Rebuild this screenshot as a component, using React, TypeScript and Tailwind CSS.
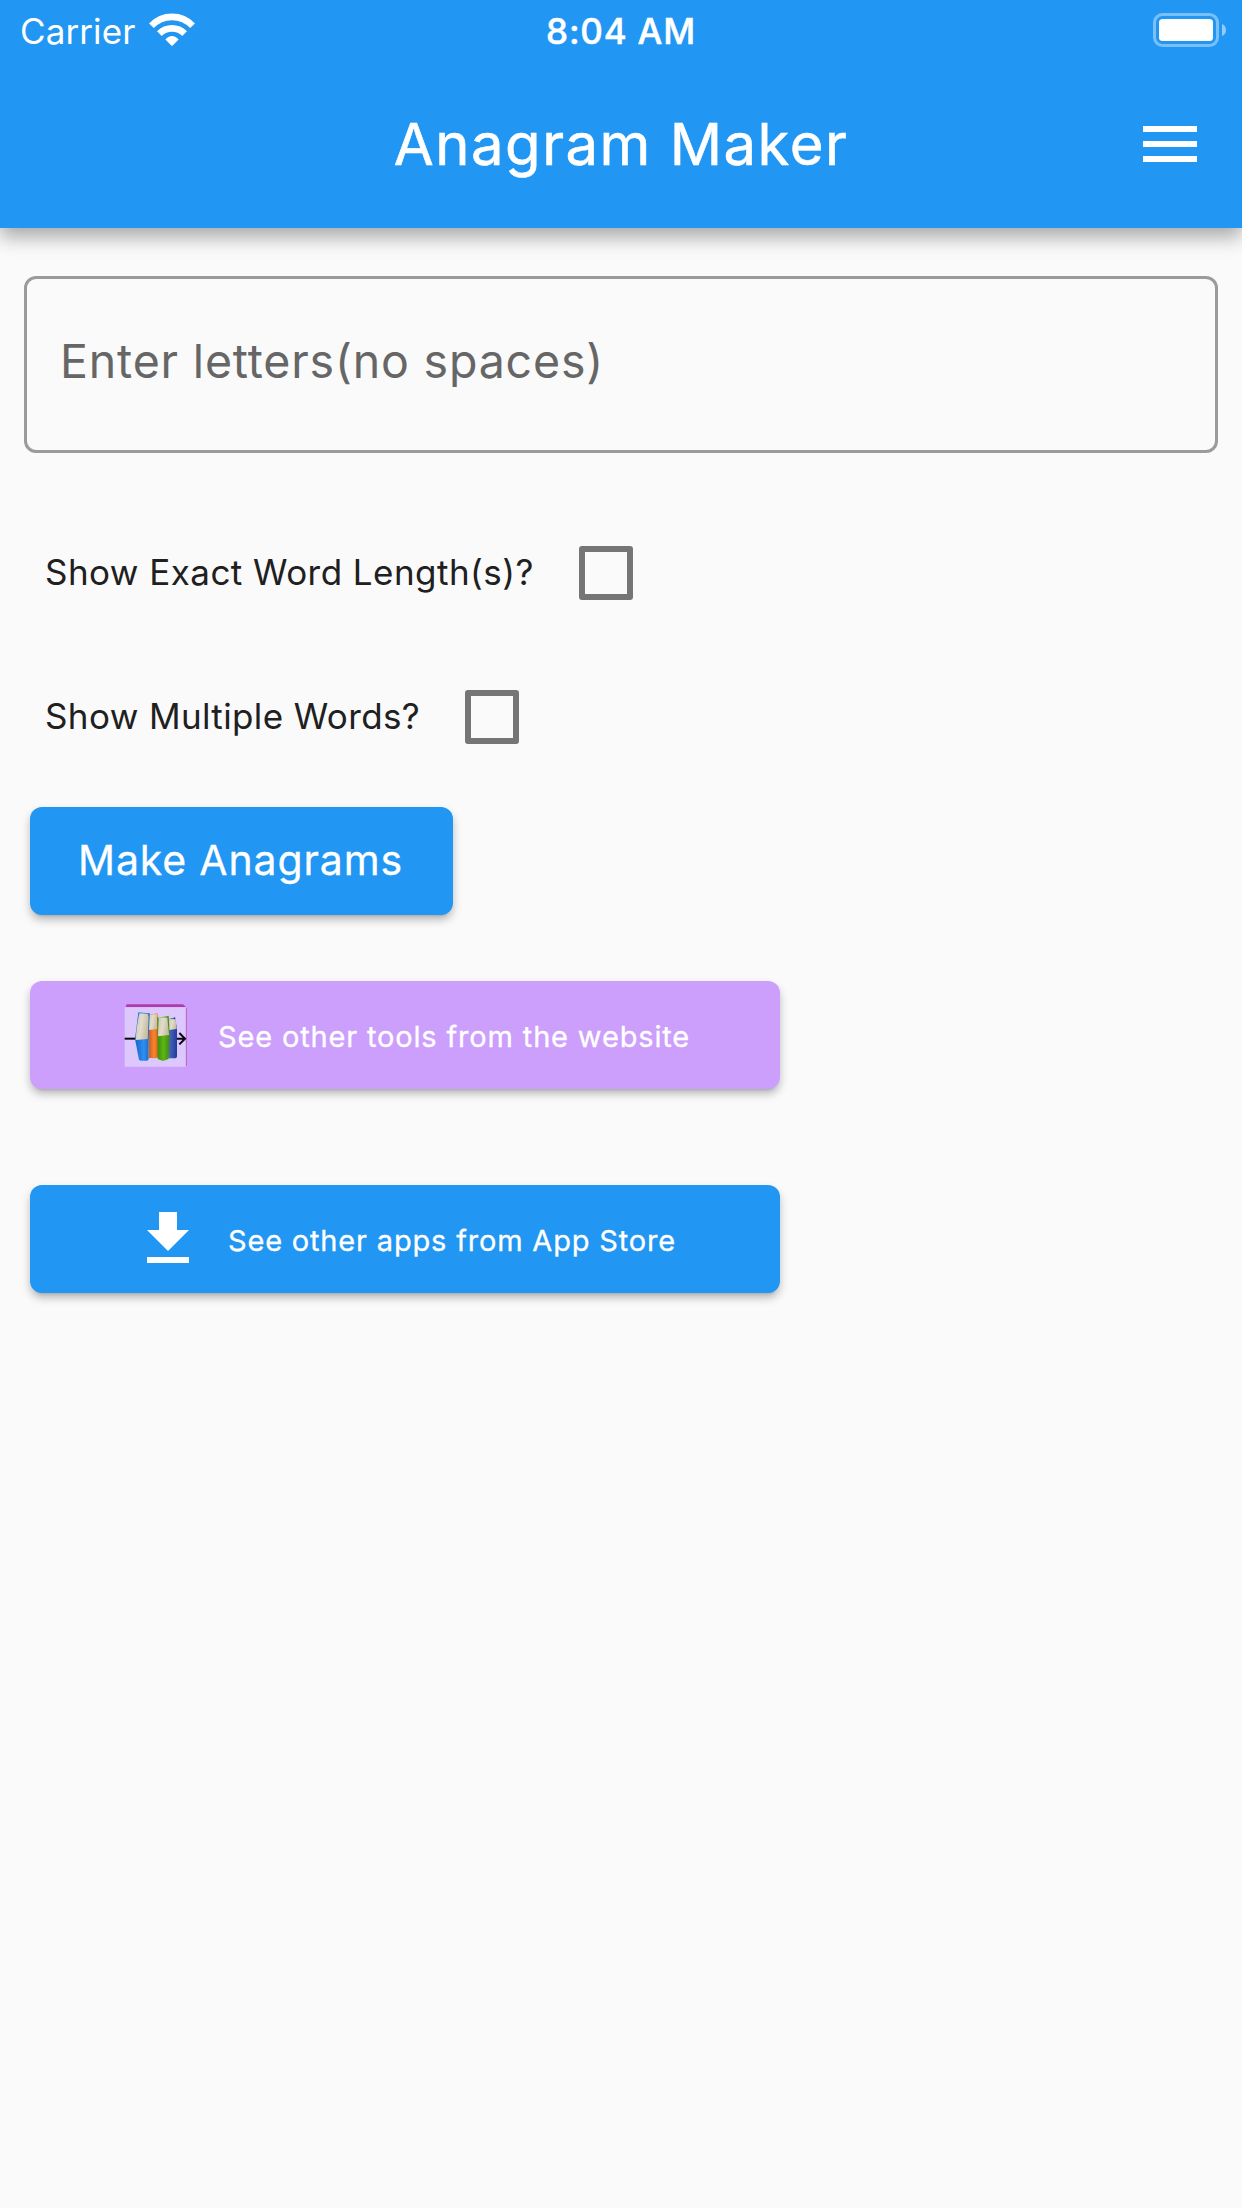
import { useState } from "react";

function WifiIcon() {
  return (
    <svg viewBox="0 0 46 33" className="ml-[14px] mt-[-5px] h-[33px] w-[46px]" fill="none" stroke="#fff">
      <path d="M2.4 12.8A28.2 28.2 0 0 1 43.6 12.8" strokeWidth="6.8" />
      <path d="M10.4 20.6A18 18 0 0 1 35.6 20.6" strokeWidth="6.8" />
      <path d="M16.4 26.4Q19.2 22.9 23 22.9T29.6 26.4L23.7 32.5Q23 33.2 22.3 32.5Z" fill="#fff" stroke="none" />
    </svg>
  );
}

function BatteryIcon() {
  return (
    <svg viewBox="0 0 73 34" className="mt-[-4px] h-[34px] w-[73px]">
      <rect x="1.5" y="1.5" width="63" height="31" rx="8" fill="none" stroke="#fff" strokeOpacity="0.4" strokeWidth="3" />
      <rect x="6" y="6" width="54" height="22" rx="3.5" fill="#fff" />
      <path d="M69 11C74.3 12.5 74.3 21.5 69 23Z" fill="#fff" fillOpacity="0.5" />
    </svg>
  );
}

function BooksIcon() {
  return (
    <svg viewBox="73 71 189 189" className="h-[63px] w-[63px]">
      <defs>
        <linearGradient id="blue" x1="0" x2="1">
          <stop offset="0" stopColor="#1565c8" />
          <stop offset="0.6" stopColor="#2f8ff0" />
          <stop offset="1" stopColor="#1765c4" />
        </linearGradient>
        <linearGradient id="orange" x1="0" x2="1">
          <stop offset="0" stopColor="#c95a16" />
          <stop offset="0.55" stopColor="#f98434" />
          <stop offset="1" stopColor="#d8600f" />
        </linearGradient>
        <linearGradient id="green" x1="0" x2="1">
          <stop offset="0" stopColor="#3c8a0a" />
          <stop offset="0.5" stopColor="#5cb618" />
          <stop offset="1" stopColor="#3d8c08" />
        </linearGradient>
        <linearGradient id="navy" x1="0" x2="1">
          <stop offset="0" stopColor="#5068c4" />
          <stop offset="1" stopColor="#203c98" />
        </linearGradient>
        <linearGradient id="pages" x1="0" x2="1" y2="0.3">
          <stop offset="0" stopColor="#cdc5b0" />
          <stop offset="0.5" stopColor="#e4dccb" />
          <stop offset="1" stopColor="#c6bda4" />
        </linearGradient>
      </defs>
      <path d="M75 81H262V259H75Z" fill="#dcc8fc" />
      <path d="M78 80L81 72H250L259 80Z" fill="#b03cac" />
      <path d="M260 82V258" stroke="#b85abc" strokeWidth="3" />
      <path d="M75 175H110" stroke="#0b0710" strokeWidth="6" />
      <path d="M230 175H256M239 158L256 175L239 192" fill="none" stroke="#0b0710" strokeWidth="6" />
      <path d="M206 116L222 113L226 109L232 146V226Q232 234 225 234H206Z" fill="url(#navy)" />
      <path d="M207 116L228 117L231 146L208 149Z" fill="url(#pages)" />
      <path d="M146 104L173 99L177 130V228Q174 234 166 234L148 233Z" fill="url(#orange)" />
      <path d="M149 103L172 101L174 146L146 149Z" fill="url(#pages)" />
      <path d="M173 112L201 108L207 106L210 160L207 236L190 242L174 236Z" fill="url(#green)" />
      <path d="M177 111L203 112L208 164L175 168Z" fill="url(#pages)" />
      <path d="M116 96L145 99L150 98L147 180V236L143 241H123L118 238L106 176Z" fill="url(#blue)" />
      <path d="M119 99L145 101L147 110L144 176L108 179Q109 142 119 99Z" fill="url(#pages)" />
    </svg>
  );
}

type CheckRowProps = { label: string; tracking: string; checked: boolean; onChange: () => void };

function CheckRow({ label, tracking, checked, onChange }: CheckRowProps) {
  return (
    <label className="flex h-36 items-center pl-[45px] text-[35px] leading-none text-[#202020]">
      <span className={`mt-[-1px] ${tracking}`}>{label}</span>
      <input
        type="checkbox"
        checked={checked}
        onChange={onChange}
        className="ml-[45px] size-[54px] shrink-0 appearance-none rounded-[3px] border-[6px] border-[#757575] checked:bg-[#2196f3]"
      />
    </label>
  );
}

const raised = "shadow-[0_6px_3px_-5px_rgba(0,0,0,0.14),0_5px_8px_0_rgba(0,0,0,0.25)]";

export default function App() {
  const [exact, setExact] = useState(false);
  const [multiple, setMultiple] = useState(false);
  return (
    <div className="h-[2208px] w-[1242px] overflow-hidden bg-[#fafafa] font-['Inter',sans-serif]">
      <header className="h-[228px] bg-[#2196f3] text-white shadow-[0_9px_18px_0_rgba(0,0,0,0.33)]">
        <div className="grid h-[60px] grid-cols-[1fr_auto_1fr] items-center pt-[3px] text-[35px] leading-none">
          <div className="flex items-center pl-5">
            <span className="mt-[-1px] tracking-[0.1px]">Carrier</span>
            <WifiIcon />
          </div>
          <span className="mt-[-1px] font-medium tracking-[0.8px] [-webkit-text-stroke:0.5px_#fff]">8:04 AM</span>
          <div className="flex justify-end pr-4">
            <BatteryIcon />
          </div>
        </div>
        <div className="grid h-[168px] grid-cols-[1fr_auto_1fr] items-center">
          <span />
          <h1 className="text-[58px] leading-none tracking-[1.5px] [-webkit-text-stroke:0.6px_#fff]">Anagram Maker</h1>
          <button aria-label="Menu" className="mr-9 justify-self-end">
            <svg viewBox="0 0 24 24" className="size-[72px]" fill="currentColor">
              <path d="M3 18h18v-2H3v2zm0-5h18v-2H3v2zm0-7v2h18V6H3z" />
            </svg>
          </button>
        </div>
      </header>

      <main>
        <div className="px-6 pt-12">
          <input
            placeholder="Enter letters(no spaces)"
            className="block h-[177px] w-full rounded-xl border-[3px] border-[#9b9b9b] bg-transparent pb-[7px] pl-[33px] text-[46.5px] tracking-[0.82px] text-[#202020] outline-none placeholder:text-[#666666]"
          />
        </div>

        <div className="pt-12">
          <CheckRow label="Show Exact Word Length(s)?" tracking="tracking-[0.45px]" checked={exact} onChange={() => setExact(!exact)} />
          <CheckRow label="Show Multiple Words?" tracking="tracking-[0.38px]" checked={multiple} onChange={() => setMultiple(!multiple)} />
        </div>

        <div className="flex flex-col items-start pl-[30px] pt-[18px] text-white [-webkit-text-stroke:0.3px_#fff]">
          <button className={`flex h-[108px] w-[423px] items-center rounded-xl bg-[#2196f3] pb-[2px] pl-[48px] text-[41px] leading-none tracking-[0.86px] ${raised}`}>
            Make Anagrams
          </button>
          <button className={`mt-[66px] flex h-[108px] w-[750px] items-center rounded-xl bg-[#cc9ffc] pl-[94px] text-[29px] leading-none tracking-[0.84px] ${raised}`}>
            <BooksIcon />
            <span className="ml-[31px] mt-[3px] whitespace-nowrap">See other tools from the website</span>
          </button>
          <button className={`mt-24 flex h-[108px] w-[750px] items-center rounded-xl bg-[#2196f3] pl-[102px] text-[29px] leading-none tracking-[0.82px] ${raised}`}>
            <svg viewBox="0 0 24 24" className="size-[72px]" fill="currentColor" stroke="none">
              <path d="M19 9h-4V3H9v6H5l7 7 7-7zM5 18v2h14v-2H5z" />
            </svg>
            <span className="ml-6 mt-[3px] whitespace-nowrap">See other apps from App Store</span>
          </button>
        </div>
      </main>
    </div>
  );
}
